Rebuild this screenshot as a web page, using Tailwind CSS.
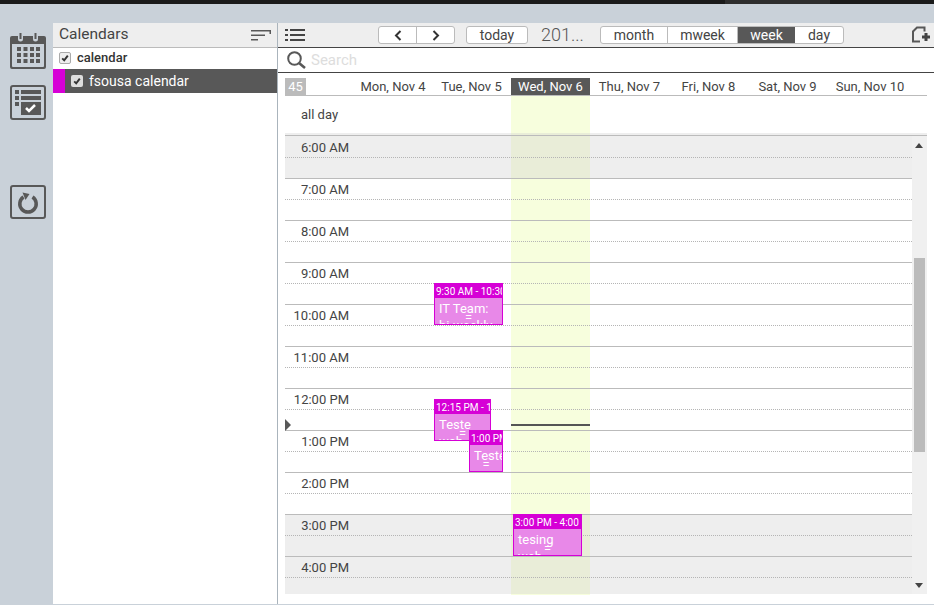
<!DOCTYPE html>
<html lang="en">
<head>
<meta charset="UTF-8">
<title>Calendar</title>
<script src="https://cdn.jsdelivr.net/npm/@tailwindcss/browser@4"></script>
</head>
<body class="bg-[#c9d1d9] font-['Roboto',sans-serif] text-[#444] overflow-hidden">
<div class="w-[934px] h-[605px] flex flex-col overflow-hidden">
  <!-- top bar -->
  <div class="h-1 shrink-0 bg-[#1a1a1a] flex">
    <div class="ml-[725px] w-[105px] bg-[#2d2d2d]"></div>
  </div>
  <div class="h-[19px] shrink-0"></div>

  <div class="flex h-[581px]">
    <!-- icon rail -->
    <div class="w-[53px] shrink-0 flex flex-col items-start pl-[10px] pt-[10px]">
      <svg class="w-9 h-9" viewBox="0 0 36 36" fill="#585858">
        <path d="M2 3h6v3a2.500 2.500 0 0 0 5 0V3h10v3a2.500 2.500 0 0 0 5 0V3h6a2 2 0 0 1 2 2v29a2 2 0 0 1-2 2H2a2 2 0 0 1-2-2V5a2 2 0 0 1 2-2zm0 8v22a1 1 0 0 0 1 1h30a1 1 0 0 0 1-1V11z"/>
        <rect x="9.500" y="0" width="2" height="6"/><rect x="24.500" y="0" width="2" height="6"/>
        <path d="M7 14h4v4H7zm6.500 0h4v4h-4zm6.500 0h4v4h-4zm6 0h4v4h-4zM7 20h4v4H7zm6.500 0h4v4h-4zm6.500 0h4v4h-4zm6 0h4v4h-4zM7 26h4v4H7zm6.500 0h4v4h-4zm6.500 0h4v4h-4zm6 0h4v4h-4z"/>
      </svg>
      <svg class="w-9 h-[35px] mt-4" viewBox="0 0 36 35" fill="#585858">
        <path fill-rule="evenodd" d="M3 0h30a3 3 0 0 1 3 3v29a3 3 0 0 1-3 3H3a3 3 0 0 1-3-3V3a3 3 0 0 1 3-3zm0 2a1 1 0 0 0-1 1v29a1 1 0 0 0 1 1h30a1 1 0 0 0 1-1V3a1 1 0 0 0-1-1z"/>
        <path d="M5 5h4v4H5zm6 0h20v4H11zM5 11h4v4H5zm6 0h20v4H11zM5 17h4v4H5z"/>
        <rect x="11" y="17" width="20" height="13"/>
        <path d="M16 23l3 3 6-6" fill="none" stroke="#fff" stroke-width="2.500"/>
      </svg>
      <div class="mt-[65px] w-9 h-[34px] rounded-[3px] border-2 border-[#585858] flex items-center justify-center">
        <svg class="w-6 h-6" viewBox="0 0 24 24" fill="none" stroke="#585858" stroke-width="3.500">
          <path d="M7.500 7a8.200 8.200 0 1 0 9 0"/>
          <path d="M6.500 2.500l7 1.500-4 6z" fill="#585858" stroke="none"/>
        </svg>
      </div>
    </div>

    <!-- calendars panel -->
    <div class="w-[225px] shrink-0 bg-white border-r border-[#aab4bc] h-[581px]">
      <div class="h-[25px] bg-[#eee] border-b border-[#bbb] flex items-center justify-between pl-[6px] pr-[6px]">
        <span class="text-[15.500px] text-[#444]">Calendars</span>
        <svg class="w-[20px] h-3" viewBox="0 0 20 12" fill="#585858">
          <path d="M0 1h20v4h-1.500V2.500H0zM0 5.500h14V7H0zM0 10h7v1.500H0z"/>
        </svg>
      </div>
      <div class="h-[21px] flex items-center pl-[6px] gap-[6px] pb-[2px]">
        <span class="w-3 h-3 rounded-[2px] border border-[#aaa] bg-[#eee] flex items-center justify-center">
          <svg class="w-2 h-2" viewBox="0 0 10 10" fill="none" stroke="#333" stroke-width="2.400"><path d="M1.500 5.500l2.500 2.500 4.500-6"/></svg>
        </span>
        <span class="text-[13px] font-medium text-[#333]">calendar</span>
      </div>
      <div class="h-6 bg-[#585858] flex items-center">
        <span class="w-3 h-6 bg-[#d600d6]"></span>
        <span class="ml-[6px] w-3 h-3 rounded-[2px] bg-[#ddd] flex items-center justify-center">
          <svg class="w-2 h-2" viewBox="0 0 10 10" fill="none" stroke="#333" stroke-width="2.400"><path d="M1.500 5.500l2.500 2.500 4.500-6"/></svg>
        </span>
        <span class="ml-[6px] text-[14px] text-white">fsousa calendar</span>
      </div>
    </div>

    <!-- main -->
    <div class="relative flex-1 bg-white h-[581px]">
      <!-- toolbar -->
      <div class="relative h-[25px] bg-[#eee] border-b border-[#444] text-[14px] text-[#444]">
        <svg class="absolute left-[7px] top-[6px] w-[20px] h-3" viewBox="0 0 20 12" fill="#444">
          <path d="M0 0h3v2H0zm5 0h15v2H5zM0 5h3v2H0zm5 0h15v2H5zM0 10h3v2H0zm5 0h15v2H5z"/>
        </svg>
        <div class="absolute left-[100px] top-[3px] w-[77px] h-[18px] bg-white border border-[#bbb] rounded-[3px] flex">
          <div class="w-[38px] border-r border-[#bbb] flex items-center justify-center">
            <svg class="w-2 h-[11px]" viewBox="0 0 8 11" fill="none" stroke="#333" stroke-width="2"><path d="M6.500 1L2 5.500 6.500 10"/></svg>
          </div>
          <div class="flex-1 flex items-center justify-center">
            <svg class="w-2 h-[11px]" viewBox="0 0 8 11" fill="none" stroke="#333" stroke-width="2"><path d="M1.500 1L6 5.500 1.500 10"/></svg>
          </div>
        </div>
        <div class="absolute left-[188px] top-[3px] w-[62px] h-[18px] bg-white border border-[#bbb] rounded-[3px] flex items-center justify-center">today</div>
        <div class="absolute left-[263px] top-0 h-6 leading-6 text-[18px] font-light text-[#555]">201...</div>
        <div class="absolute left-[322px] top-[3px] w-[244px] h-[18px] bg-white border border-[#bbb] rounded-[3px] flex overflow-hidden">
          <div class="w-[67px] border-r border-[#bbb] flex items-center justify-center">month</div>
          <div class="w-[70px] border-r border-[#bbb] flex items-center justify-center">mweek</div>
          <div class="w-[57px] bg-[#585858] text-white flex items-center justify-center">week</div>
          <div class="flex-1 flex items-center justify-center">day</div>
        </div>
        <svg class="absolute left-[634px] top-[3px] w-[18px] h-[18px]" viewBox="0 0 18 18" fill="none">
          <path d="M9 1.500H5L1 5.500v10h7M9 1.500h3.500v4" stroke="#585858" stroke-width="2"/>
          <path d="M10 11h8M14 7v8" stroke="#444" stroke-width="3"/>
        </svg>
      </div>
      <!-- search -->
      <div class="h-[25px] border-b border-[#444] flex items-center pl-[8px]">
        <svg class="w-[21px] h-[18px] shrink-0" viewBox="0 0 21 18" fill="none" stroke="#585858">
          <circle cx="8.500" cy="7.500" r="6.300" stroke-width="2"/>
          <path d="M13 12l6 5" stroke-width="2.600"/>
        </svg>
        <input class="ml-1 w-[200px] text-[15px] outline-none placeholder:text-[#ddd] bg-transparent" placeholder="Search">
      </div>

      <!-- today highlight -->
      <div class="absolute left-[233px] top-[73px] w-[79px] h-[499px] bg-[#f7fedd]"></div>

      <!-- day headers -->
      <div class="relative mt-[5px] ml-[7px] w-[642px] h-[18px] border-b border-[#bbb] flex text-[13px] text-[#444] leading-[17px] text-center">
        <div class="w-[21px] bg-[#bbb] text-white">45</div>
        <div class="w-[48px]"></div>
        <div class="w-[78px]">Mon, Nov 4</div>
        <div class="w-[79px]">Tue, Nov 5</div>
        <div class="w-[79px] bg-[#585858] text-white">Wed, Nov 6</div>
        <div class="w-[79px]">Thu, Nov 7</div>
        <div class="w-[79px]">Fri, Nov 8</div>
        <div class="w-[79px]">Sat, Nov 9</div>
        <div class="w-[86px] whitespace-nowrap">Sun, Nov 10</div>
      </div>
      <!-- all day -->
      <div class="relative ml-[7px] h-[37px] text-[13px] text-[#444] pl-4 pt-[11px] leading-4">all day</div>
      <div class="relative ml-[7px] w-[642px] h-[3px] bg-[#eee] border-b border-[#bbb]">
        <div class="absolute left-[226px] top-0 w-[79px] h-[2px] bg-[#e9edd8]"></div>
      </div>

      <!-- scroller -->
      <div class="relative ml-[7px] w-[642px] h-[458px] flex">
        <div class="relative w-[627px]">
          <div class="relative h-[43px] pt-px bg-[#eee] border-b border-[#bbb]"><div class="absolute left-[226px] inset-y-0 w-[79px] bg-[#e9edd8]"></div><div class="relative h-[21px] border-b border-dotted border-[#b5b5b5] w-full text-[13px] text-right pr-[563px] leading-[21px]">6:00&nbsp;AM</div></div>
          <div class="h-[42px] border-b border-[#bbb]"><div class="h-[21px] border-b border-dotted border-[#b5b5b5] w-full text-[13px] text-right pr-[563px] leading-[21px]">7:00&nbsp;AM</div></div>
          <div class="h-[42px] border-b border-[#bbb]"><div class="h-[21px] border-b border-dotted border-[#b5b5b5] w-full text-[13px] text-right pr-[563px] leading-[21px]">8:00&nbsp;AM</div></div>
          <div class="h-[42px] border-b border-[#bbb]"><div class="h-[21px] border-b border-dotted border-[#b5b5b5] w-full text-[13px] text-right pr-[563px] leading-[21px]">9:00&nbsp;AM</div></div>
          <div class="h-[42px] border-b border-[#bbb]"><div class="h-[21px] border-b border-dotted border-[#b5b5b5] w-full text-[13px] text-right pr-[563px] leading-[21px]">10:00&nbsp;AM</div></div>
          <div class="h-[42px] border-b border-[#bbb]"><div class="h-[21px] border-b border-dotted border-[#b5b5b5] w-full text-[13px] text-right pr-[563px] leading-[21px]">11:00&nbsp;AM</div></div>
          <div class="h-[42px] border-b border-[#bbb]"><div class="h-[21px] border-b border-dotted border-[#b5b5b5] w-full text-[13px] text-right pr-[563px] leading-[21px]">12:00&nbsp;PM</div></div>
          <div class="h-[42px] border-b border-[#bbb]"><div class="h-[21px] border-b border-dotted border-[#b5b5b5] w-full text-[13px] text-right pr-[563px] leading-[21px]">1:00&nbsp;PM</div></div>
          <div class="h-[42px] border-b border-[#bbb]"><div class="h-[21px] border-b border-dotted border-[#b5b5b5] w-full text-[13px] text-right pr-[563px] leading-[21px]">2:00&nbsp;PM</div></div>
          <div class="relative h-[42px] bg-[#eee] border-b border-[#bbb]"><div class="absolute left-[226px] inset-y-0 w-[79px] bg-[#e9edd8]"></div><div class="relative h-[21px] border-b border-dotted border-[#b5b5b5] w-full text-[13px] text-right pr-[563px] leading-[21px]">3:00&nbsp;PM</div></div>
          <div class="relative h-[37px] bg-[#eee]"><div class="absolute left-[226px] inset-y-0 w-[79px] bg-[#e9edd8]"></div><div class="relative h-[21px] border-b border-dotted border-[#b5b5b5] w-full text-[13px] text-right pr-[563px] leading-[21px]">4:00&nbsp;PM</div></div>

          <!-- now marker -->
          <div class="absolute left-0 top-[283px] w-0 h-0 border-y-[6px] border-y-transparent border-l-[6px] border-l-[#585858]"></div>
          <div class="absolute left-[226px] top-[288px] w-[79px] h-[2px] bg-[#555]"></div>

          <!-- events -->
          <div class="absolute left-[149px] top-[147px] w-[69px] h-[42px] overflow-hidden bg-[#e888e8] border border-[#d600d6] text-white">
            <div class="h-[14px] -mx-px bg-[#d600d6] text-[10px] leading-[15px] pl-[2px] whitespace-nowrap">9:30 AM - 10:30</div>
            <div class="px-1 pt-[2px] text-[13px] leading-[17px]">IT Team:<br>bi-weekly</div>
            <div class="absolute left-0 right-0 bottom-[2px] text-center text-[13px] leading-[8px]">=</div>
          </div>
          <div class="absolute left-[149px] top-[263px] w-[57px] h-[42px] overflow-hidden bg-[#e888e8] border border-[#d600d6] text-white">
            <div class="h-[14px] -mx-px bg-[#d600d6] text-[10px] leading-[15px] pl-[2px] whitespace-nowrap">12:15 PM - 1:15</div>
            <div class="px-1 pt-[2px] text-[13px] leading-[17px]">Teste<br>web</div>
            <div class="absolute left-0 right-0 bottom-[2px] text-center text-[13px] leading-[8px]">=</div>
          </div>
          <div class="absolute left-[184px] top-[294px] w-[34px] h-[42px] overflow-hidden bg-[#e888e8] border border-[#d600d6] text-white">
            <div class="h-[14px] -mx-px bg-[#d600d6] text-[10px] leading-[15px] pl-[2px] whitespace-nowrap">1:00 PM</div>
            <div class="px-1 pt-[2px] text-[13px] leading-[17px] whitespace-nowrap">Teste</div>
            <div class="absolute left-0 right-0 bottom-[2px] text-center text-[13px] leading-[8px]">=</div>
          </div>
          <div class="absolute left-[228px] top-[378px] w-[69px] h-[42px] overflow-hidden bg-[#e888e8] border border-[#d600d6] text-white">
            <div class="h-[14px] -mx-px bg-[#d600d6] text-[10px] leading-[15px] pl-[2px] whitespace-nowrap">3:00 PM - 4:00</div>
            <div class="px-1 pt-[2px] text-[13px] leading-[17px]">tesing<br>web</div>
            <div class="absolute left-0 right-0 bottom-[2px] text-center text-[13px] leading-[8px]">=</div>
          </div>
        </div>
        <!-- scrollbar -->
        <div class="relative w-[15px] h-[458px] bg-[#f0f0f0]">
          <svg class="absolute left-[3px] top-[7px] w-[8px] h-[5px]" viewBox="0 0 8 5" fill="#444"><path d="M4 0l4 5H0z"/></svg>
          <div class="absolute left-[2px] top-[122px] w-[11px] h-[194px] bg-[#bbb]"></div>
          <svg class="absolute left-[3px] top-[447px] w-[8px] h-[5px]" viewBox="0 0 8 5" fill="#444"><path d="M4 5l4-5H0z"/></svg>
        </div>
      </div>
    </div>
  </div>
  <div class="h-px shrink-0"></div>
</div>
</body>
</html>
